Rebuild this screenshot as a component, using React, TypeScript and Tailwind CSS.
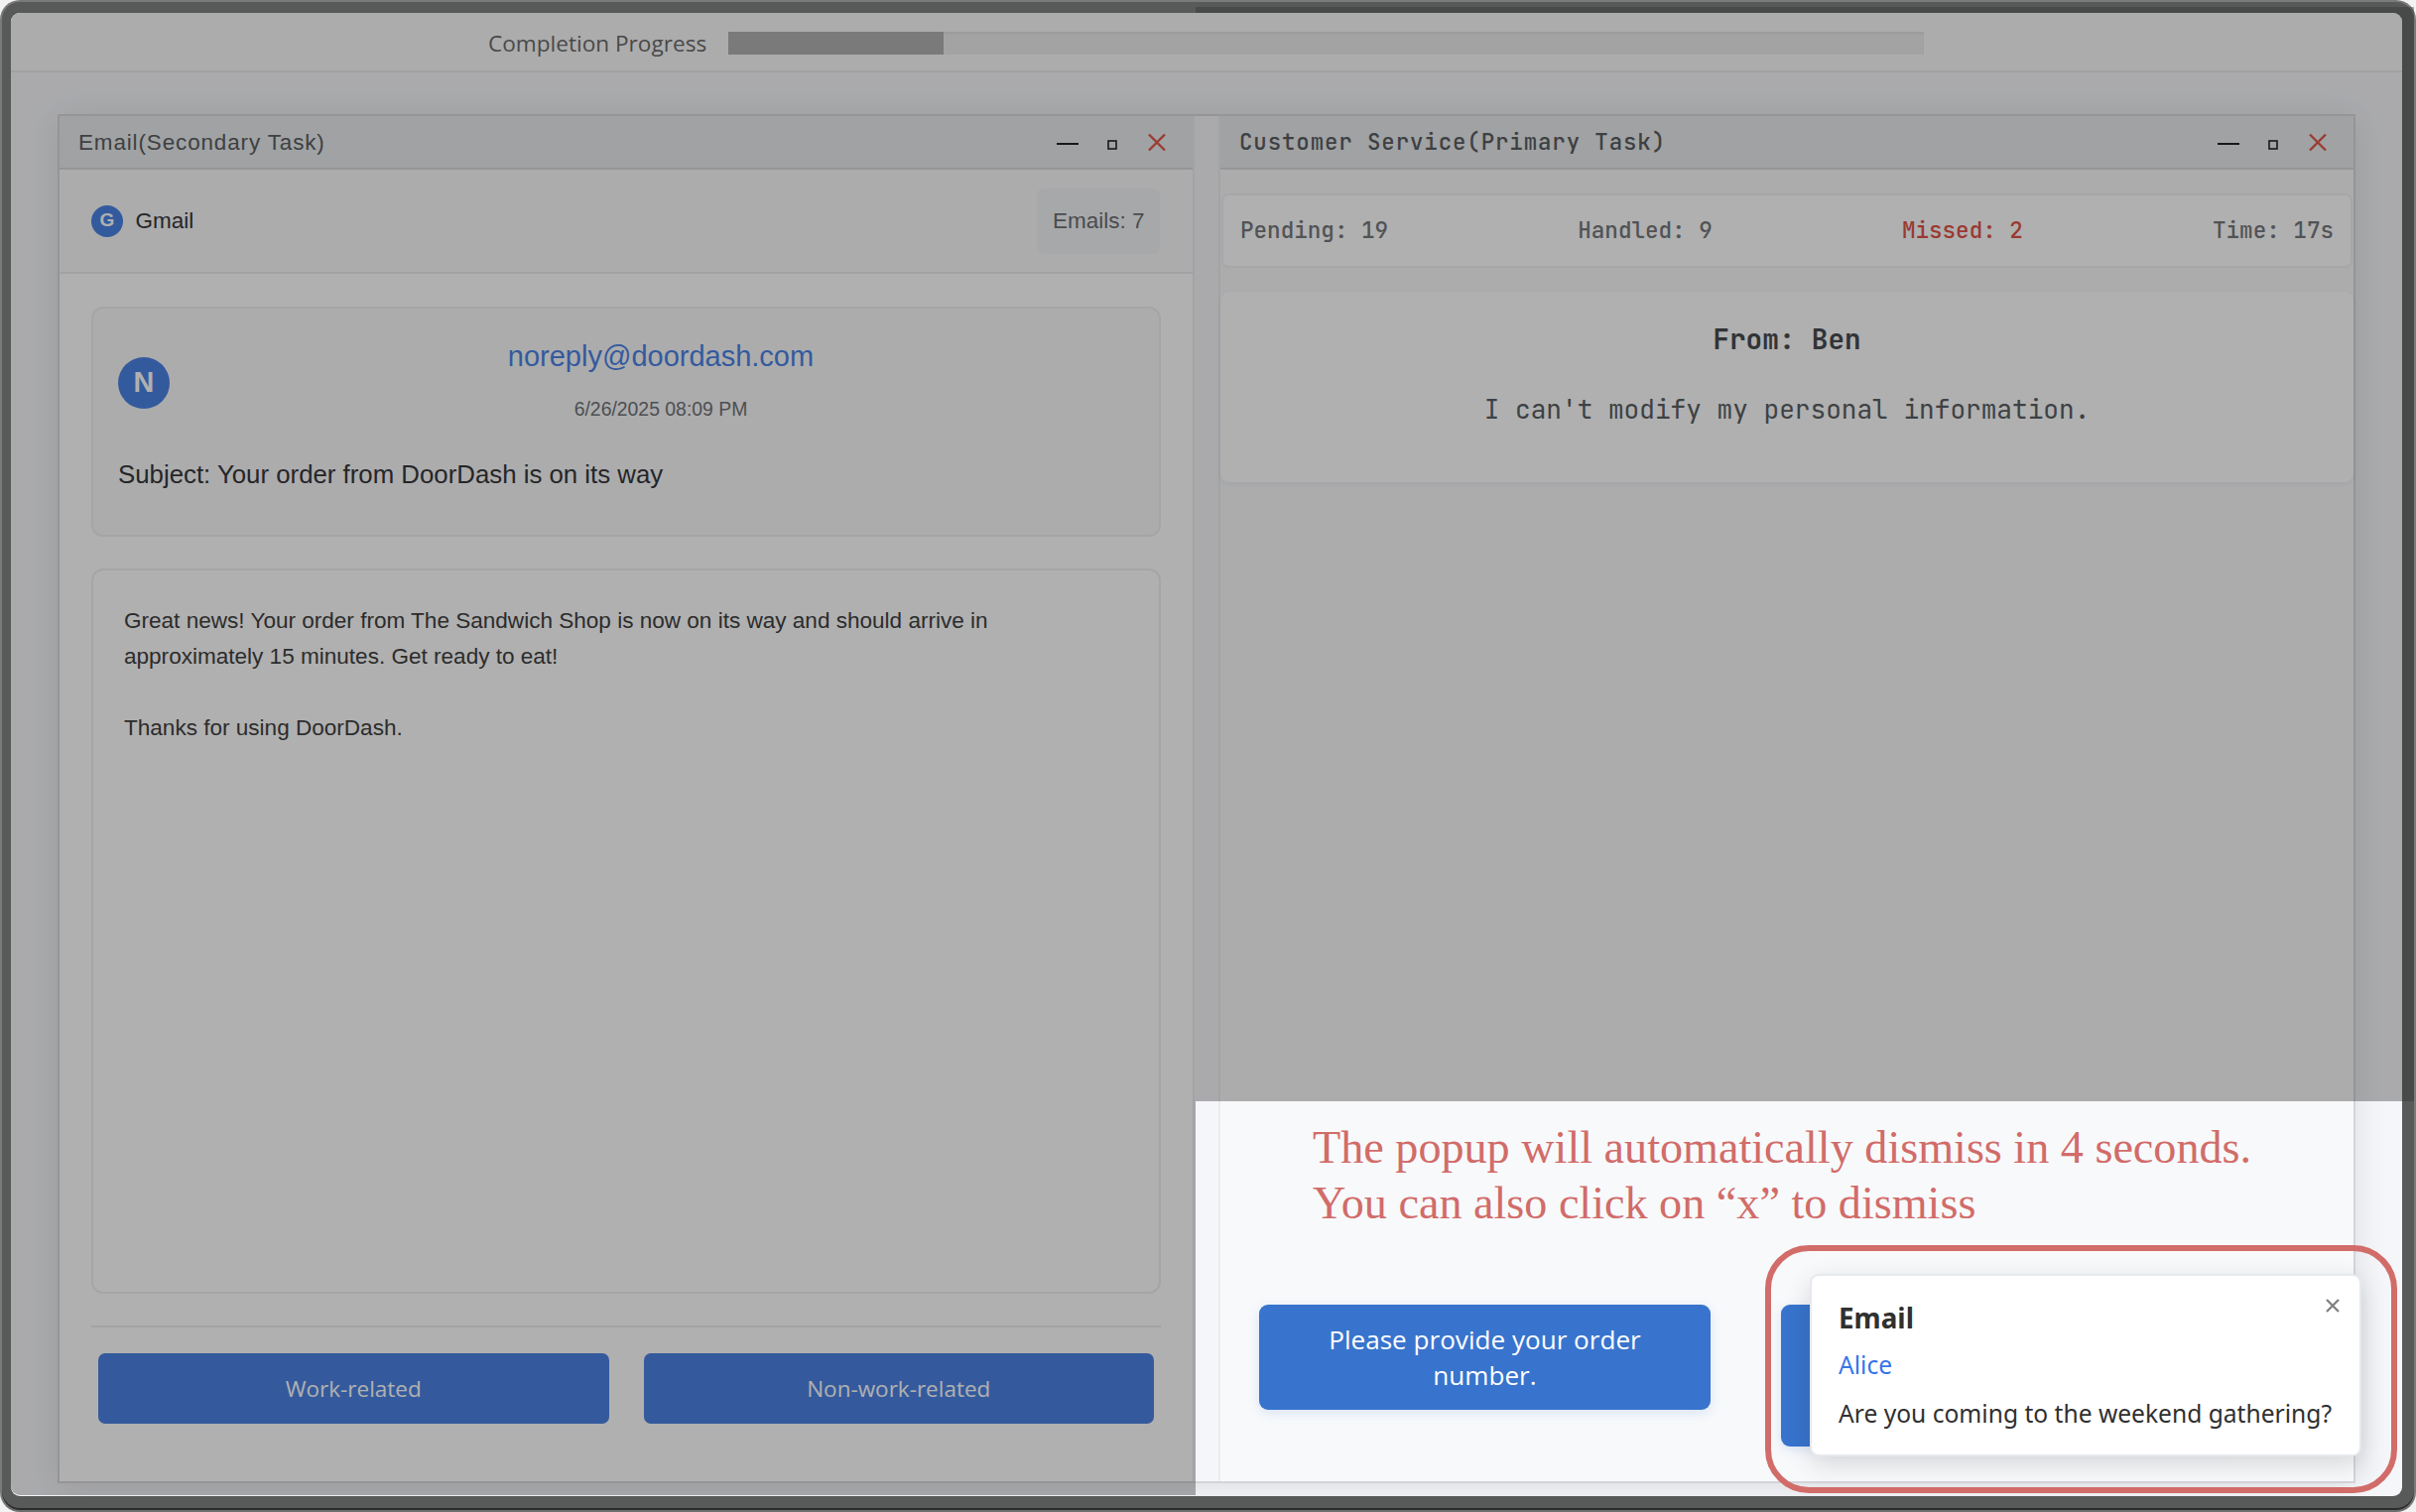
import type { ReactNode } from "react";

function WindowControls() {
  return (
    <svg className="mt-[2px] h-[20px] w-[112px]" viewBox="0 0 112 20" fill="none">
      <path d="M2 11H24" stroke="#0b0b0b" strokeWidth="2" />
      <rect x="54" y="8" width="8" height="8" stroke="#0b0b0b" strokeWidth="1.6" />
      <path d="M95 1.5L111 17.5M111 1.5L95 17.5" stroke="#dc4435" strokeWidth="2.4" />
    </svg>
  );
}

function TitleBar({ children }: { children: ReactNode }) {
  return (
    <div className="flex h-[54px] shrink-0 items-center justify-between border-b-2 border-[#d3d6d9] bg-[#e5e8eb] pr-[27px] pl-[19px] text-[22.4px] tracking-[0.9px] text-[#484b4e]">
      {children}
      <WindowControls />
    </div>
  );
}

function EmailPanel() {
  return (
    <section className="flex w-[1144px] shrink-0 flex-col border-r-2 border-[#e9eaee] bg-white font-['Liberation_Sans',sans-serif]">
      <TitleBar>
        <span className="pt-[2px]">Email(Secondary Task)</span>
      </TitleBar>
      <div className="flex h-[105px] shrink-0 items-center justify-between border-b-2 border-[#e6e8ea] bg-[#f8f9fa] pr-[33px] pl-8 text-[22.5px]">
        <div className="flex items-center gap-[12.5px] text-[#202124]">
          <span className="flex size-8 items-center justify-center rounded-full bg-[#3774e2] text-[19px] font-bold text-white">G</span>
          <span className="pt-px">Gmail</span>
        </div>
        <span className="flex h-[66px] items-center rounded-[6px] bg-[#f1f3f5] px-[15.5px] pt-px text-[#5a5e62]">Emails: 7</span>
      </div>

      <div className="flex flex-1 flex-col pt-[33px] pr-8 pl-8">
        <div className="h-[232px] shrink-0 rounded-[12px] border-2 border-[#eceeef] bg-[#f8f9fa] px-[25px] pt-[30px]">
          <div className="flex items-center gap-[18px]">
            <span className="mt-[7px] flex size-[52px] items-center justify-center rounded-full bg-[#3774e2] text-[28.8px] font-bold text-white">N</span>
            <div className="flex flex-1 flex-col items-center gap-[23px]">
              <span className="text-[29px] leading-[36px] text-[#3774e2]">noreply@doordash.com</span>
              <span className="text-[19.4px] leading-[24px] text-[#5f6368]">6/26/2025 08:09 PM</span>
            </div>
          </div>
          <p className="mt-[36px] text-[25.8px] leading-[36px] text-[#202124]">Subject: Your order from DoorDash is on its way</p>
        </div>

        <div className="mt-8 h-[731px] shrink-0 rounded-[12px] border-2 border-[#eceeef] bg-white px-[31px] pt-[33px] text-[22.56px] leading-[35.9px] text-[#2a2a2a]">
          Great news! Your order from The Sandwich Shop is now on its way and should arrive in
          <br />
          approximately 15 minutes. Get ready to eat!
          <br />
          <br />
          Thanks for using DoorDash.
        </div>

        <div className="mt-8 grid grid-cols-2 gap-[35px] border-t-2 border-[#e9ebed] px-[7px] pt-[26px] font-['Open_Sans',sans-serif] text-[22.5px] text-white">
          <button className="h-[71px] rounded-[7px] bg-[#3774e0]">Work-related</button>
          <button className="h-[71px] rounded-[7px] bg-[#3774e0]">Non-work-related</button>
        </div>
      </div>
    </section>
  );
}

function ServicePanel() {
  return (
    <section className="flex flex-1 flex-col border-l-2 border-[#ebecef] bg-[#f8f9fb] font-['JetBrains_Mono',monospace]">
      <TitleBar>
        <span className="pt-[2px] font-medium">Customer Service(Primary Task)</span>
      </TitleBar>
      <div className="mx-px mt-[24px] flex h-[75px] shrink-0 items-center justify-between rounded-[7px] border-2 border-[#eef0f2] bg-white px-[17px] pt-px text-[22.6px] font-medium text-[#666a6e]">
        <span>Pending: 19</span>
        <span>Handled: 9</span>
        <span className="text-[#dc3f31]">Missed: 2</span>
        <span>Time: 17s</span>
      </div>
      <div className="mt-6 flex h-[192px] shrink-0 flex-col items-center rounded-[9px] bg-white pt-[30px] shadow-[0_2px_6px_rgba(0,0,0,0.06)]">
        <p className="text-[27.6px] leading-[36px] font-semibold text-[#33383c]">From: Ben</p>
        <p className="mt-[35px] text-[26.1px] leading-[36px] text-[#484d52]">I can't modify my personal information.</p>
      </div>
      <div className="mt-auto mb-[35px] flex h-[143px] items-start gap-[71px] pl-[39px] font-['Open_Sans',sans-serif] text-[26.1px] leading-[36px] text-white">
        <button className="h-[106px] w-[455px] rounded-[9px] bg-[#3874cd] px-10 shadow-[0_3px_12px_rgba(56,116,205,0.16)]">
          Please provide your order number.
        </button>
        <button className="h-[143px] w-[455px] rounded-[9px] bg-[#3874cd] shadow-[0_3px_12px_rgba(56,116,205,0.16)]" aria-label="Reply option" />
      </div>
    </section>
  );
}

function Popup() {
  return (
    <div className="absolute top-[1284px] left-[1824px] h-[184px] w-[556px] rounded-[9px] border-2 border-[#e6e9ed] bg-white pt-[23px] pl-[27px] font-['Noto_Sans',sans-serif] whitespace-nowrap shadow-[0_8px_26px_rgba(0,0,0,0.14)]">
      <p className="text-[27.8px] leading-[38px] font-bold text-[#303030]">Email</p>
      <p className="mt-[12px] text-[24.6px] leading-[34px] text-[#3774e8]">Alice</p>
      <p className="mt-[14px] text-[24.6px] leading-[36px] text-[#303030]">Are you coming to the weekend gathering?</p>
      <svg className="absolute top-[23px] right-[20px] size-[14px]" viewBox="0 0 14 14">
        <path d="M1 1L13 13M13 1L1 13" stroke="#808080" strokeWidth="2.3" />
      </svg>
    </div>
  );
}

export default function App() {
  return (
    <div className="relative h-[1524px] w-[2435px] overflow-hidden bg-[#f2f2f2]">
      <div className="flex h-full w-full rounded-[20px] border-2 border-[#7a7a7a] border-b-[#6e6e6e] bg-[#585959] pt-[11px] pr-[12px] pb-[14px] pl-[9px] shadow-[inset_0_-2px_0_#2c2c2c]">
        <div className="flex w-full flex-col overflow-hidden rounded-[9px] bg-[#f5f6fa]">
          <header className="flex h-[60px] shrink-0 items-center border-b-2 border-[#e6e7e9] bg-[#f8f8f9] pt-[3px] pl-[481px] font-['Open_Sans',sans-serif] text-[22.6px] text-[#5a5a5a]">
            <span className="w-[242px]">Completion Progress</span>
            <div className="h-[23px] w-[1205px] bg-[#ebebec] shadow-[inset_0_2px_3px_rgba(0,0,0,0.06)]">
              <div className="h-full w-[18%] bg-[#a9a9a9]" />
            </div>
          </header>
          <main className="mx-[47px] mt-[42px] flex h-[1380px] w-[2316px] shrink-0 gap-[24px] border-2 border-[#d3d4d7] shadow-[0_4px_32px_rgba(0,0,0,0.1)]">
            <EmailPanel />
            <ServicePanel />
          </main>
        </div>
      </div>

      <div className="absolute top-[13px] left-[11px] h-[1494px] w-[1194px] rounded-l-[9px] bg-[#303030]/38" />
      <div className="absolute top-[7px] left-[1205px] h-[1103px] w-[1228px] bg-[#303030]/38" />

      <p className="absolute top-[1129px] left-[1323px] font-['Liberation_Serif',serif] text-[46.17px] leading-[56px] whitespace-nowrap text-[#d16c69]">
        The popup will automatically dismiss in 4 seconds.
        <br />
        You can also click on “x” to dismiss
      </p>
      <Popup />
      <div className="absolute top-[1255px] left-[1779px] h-[250px] w-[637px] rounded-[44px] border-[6px] border-[#d16c69]" />
    </div>
  );
}
